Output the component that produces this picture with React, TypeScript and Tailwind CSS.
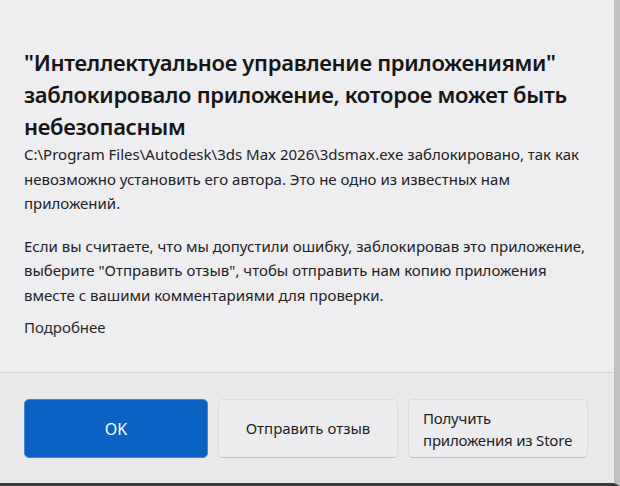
import React from "react";

const font = { fontFamily: '"Noto Sans", "Open Sans", sans-serif' };

export default function App() {
  return (
    <div
      className="w-[620px] h-[486px] flex flex-col bg-[#eeedf0] text-[#1b1b1b] overflow-hidden border-r-[6px] border-b-[3px] border-r-[#c2c2c4] border-b-[#3a3a3a]"
      style={font}
    >
      <div className="flex-1 px-6 pt-[46px]">
        <h1 className="text-[22px] leading-[32px] font-semibold tracking-[-0.3px] text-[#161616]">
          "Интеллектуальное управление приложениями" заблокировало приложение, которое может быть
          небезопасным
        </h1>
        <p className="mt-0 text-[15px] leading-[24.5px] text-[#222]">
          C:\Program Files\Autodesk\3ds Max 2026\3dsmax.exe заблокировано, так как невозможно
          установить его автора. Это не одно из известных нам приложений.
        </p>
        <p className="mt-[18px] text-[15px] leading-[24.5px] text-[#222]">
          Если вы считаете, что мы допустили ошибку, заблокировав это приложение, выберите
          "Отправить отзыв", чтобы отправить нам копию приложения вместе с вашими комментариями
          для проверки.
        </p>
        <p className="mt-[8px] text-[15px] leading-[24px] text-[#2a2a2a]">Подробнее</p>
      </div>
      <div className="h-[111px] border-t border-[#d6d6d9] bg-[#e9e8eb] px-6 pt-[26px] flex gap-[10px]">
        <button className="w-[184px] h-[59px] rounded-[5px] bg-[#0b62c2] border border-[#3f86d6] text-white text-[16px]">
          OK
        </button>
        <button className="w-[180px] h-[59px] rounded-[5px] bg-[#ecebee] border border-[#dcdcdf] border-b-[#bdbdc0] text-[#1e1e1e] text-[15px]">
          Отправить отзыв
        </button>
        <button className="w-[180px] h-[59px] rounded-[5px] bg-[#ecebee] border border-[#dcdcdf] border-b-[#bdbdc0] text-[#1e1e1e] text-[15px] text-left pl-[14px] pr-1 leading-[22px] whitespace-nowrap tracking-[-0.2px]">
          Получить
          <br />
          приложения из Store
        </button>
      </div>
    </div>
  );
}
